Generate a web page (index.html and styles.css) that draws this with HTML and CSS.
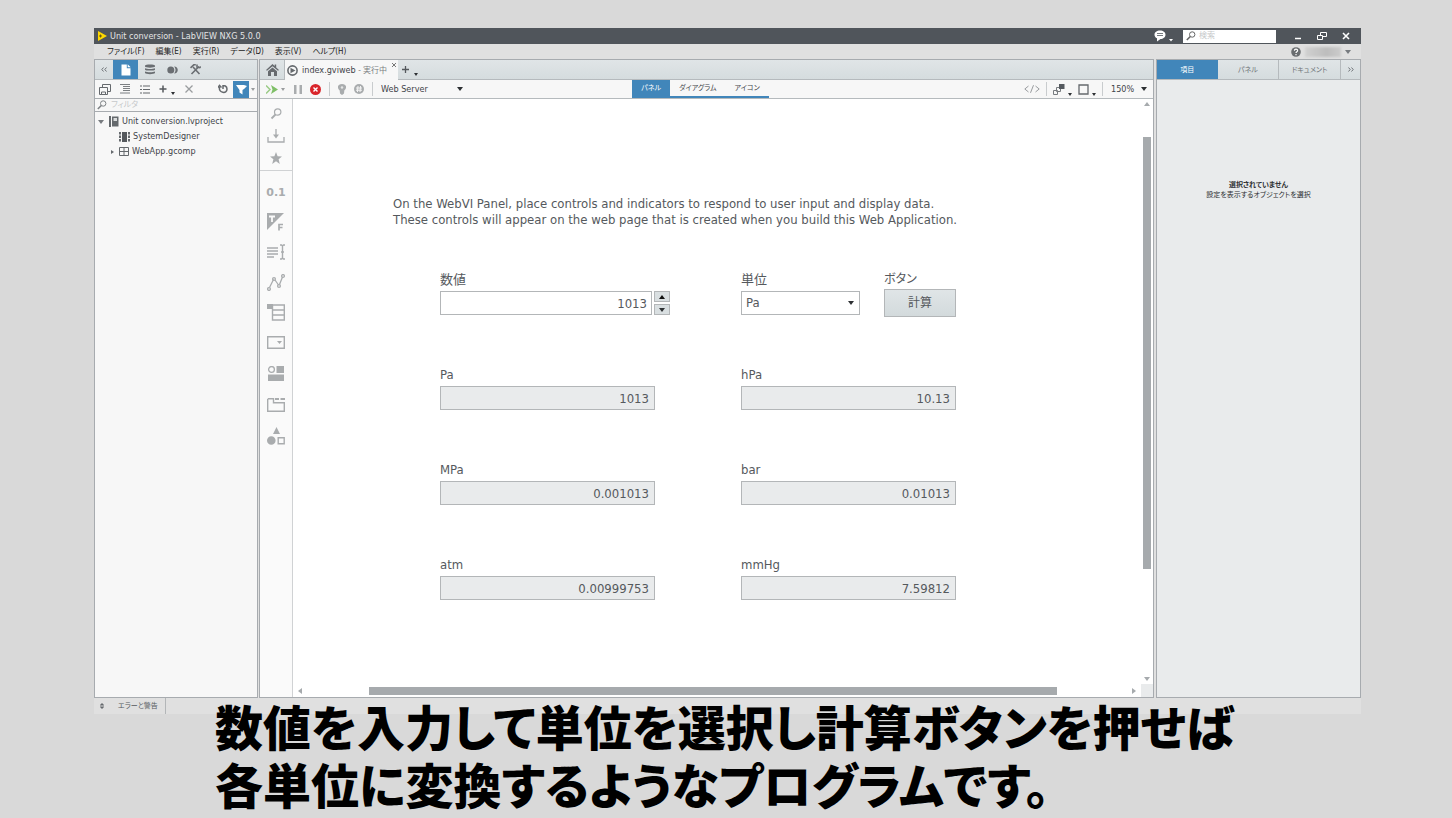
FILE: index.html
```
<!DOCTYPE html>
<html lang="ja">
<head>
<meta charset="utf-8">
<title>Unit conversion - LabVIEW NXG 5.0.0</title>
<link rel="stylesheet" href="styles.css">
</head>
<body>
<div class="app">
  <header class="titlebar">
    <svg class="logo" width="9" height="10" viewBox="0 0 9 10"><path d="M0 0 9 5 0 10Z" fill="#ffd800"/><path d="M1 5h3M2.500 3.500v3" stroke="#6b5a10"/></svg>
    <h1 class="app-title">Unit conversion - LabVIEW NXG 5.0.0</h1>
    <button class="feedback" aria-label="フィードバック"><svg width="20" height="12" viewBox="0 0 20 12"><path d="M6 .5c3.200 0 5.500 1.800 5.500 4.200S9.200 9 6.500 9L3 11.500V8.300C1.400 7.500.5 6.200.5 4.700.5 2.300 2.800.5 6 .5Z" fill="#fff"/><path d="M3 3.500h6M3 5.500h6" stroke="#777c81"/><path d="M15 9h4l-2 2.500Z" fill="#fff"/></svg></button>
    <label class="search"><svg width="10" height="10" viewBox="0 0 10 10" fill="none" stroke="#666"><circle cx="6.200" cy="3.500" r="2.700"/><path d="M4.300 5.500.8 9" stroke-width="1.600"/></svg><input type="text" placeholder="検索" aria-label="検索"></label>
    <div class="window-buttons">
      <button aria-label="最小化"><svg width="10" height="10" viewBox="0 0 10 10"><path d="M2 7.500h6" stroke="#fff" stroke-width="1.500"/></svg></button>
      <button aria-label="元に戻す"><svg width="10" height="10" viewBox="0 0 10 10" fill="#50555b" stroke="#fff"><path d="M3.500 1.500h6v4h-6Z"/><path d="M.5 4.500h5v4h-5Z"/></svg></button>
      <button aria-label="閉じる"><svg width="10" height="10" viewBox="0 0 10 10"><path d="m2 2 6 6M8 2 2 8" stroke="#fff" stroke-width="1.600"/></svg></button>
    </div>
  </header>
  <nav class="menubar">
    <button>ファイル(F)</button><button>編集(E)</button><button>実行(R)</button><button>データ(D)</button><button>表示(V)</button><button>ヘルプ(H)</button>
    <button class="account" aria-label="アカウント"><svg width="10" height="10" viewBox="0 0 10 10"><circle cx="5" cy="5" r="4.800" fill="#6a6d70"/><path d="M3.400 3.800C3.400 1.700 6.600 1.700 6.600 3.700 6.600 4.800 5 4.800 5 6M5 7v1.200" stroke="#fff" fill="none" stroke-width="1.200"/></svg><span class="account-name"></span><i class="caret muted"></i></button>
  </nav>

  <div class="workspace">
    <aside class="project">
      <div class="tabs">
        <button class="chevrons" aria-label="折りたたむ"><svg width="6" height="5" viewBox="0 0 6 5" fill="none" stroke="#6e7377"><path d="M2.500.5.8 2.500l1.700 2M5.500.5 3.800 2.500l1.700 2"/></svg></button>
        <button class="tab-icon active" aria-label="ファイル"><svg width="10" height="12" viewBox="0 0 10 12"><path d="M.5.5h5.300v3.700h3.700v7.300h-9Z" fill="#fff"/><path d="m6.700.3 3 3h-3Z" fill="#fff"/></svg></button>
        <button class="tab-icon" aria-label="データ"><svg width="10" height="11" viewBox="0 0 10 11" fill="#6a6e72"><path d="M0 1.500C0 0 10 0 10 1.500v1C10 4 0 4 0 2.500ZM0 4.200c2 1 8 1 10 0v1.500c-1 1.200-9 1.200-10 0ZM0 7.500c2 1 8 1 10 0V9c-1 1.500-9 1.500-10 0Z"/></svg></button>
        <button class="tab-icon" aria-label="キャプチャ"><svg width="11" height="8" viewBox="0 0 11 8"><circle cx="3.800" cy="4" r="3.500" fill="#6a6e72"/><path d="M7 .5C12 .5 12 7.500 7 7.500 9 5.500 9 2.500 7 .5Z" fill="#6a6e72"/></svg></button>
        <button class="tab-icon" aria-label="ツール"><svg width="11" height="11" viewBox="0 0 11 11" fill="none" stroke="#6a6e72" stroke-width="1.600"><path d="m3 3 6.500 7M9 2.500 1.500 10"/><path d="M.5 3.800 3.800.8h2M7 .5v2.700l2.700.5 1-1.200"/></svg></button>
      </div>
      <div class="toolbar">
        <button class="tool" aria-label="すべて保存"><svg width="12" height="11" viewBox="0 0 12 11" fill="#f7f7f7" stroke="#65696d"><path d="M3.500.5h8v7h-8Z"/><path d="M.5 3.500h8v7h-8Z"/><path d="M2.500 8v2.500h4V8Z"/></svg></button>
        <button class="tool" aria-label="展開"><svg width="10" height="10" viewBox="0 0 10 10" stroke="#7b7f82"><path d="M0 .5h10M3 2.500h7M3 4.500h7M3 6.500h7M0 9h10" /></svg></button>
        <button class="tool" aria-label="一覧"><svg width="10" height="9" viewBox="0 0 10 9" stroke="#65696d" stroke-width="1.200"><path d="M0 1h2M3 1h7M0 4.500h2M3 4.500h7M0 8h2M3 8h7"/></svg></button>
        <button class="tool tool-add" aria-label="追加"><svg width="8" height="8" viewBox="0 0 8 8"><path d="M4 .5v7M.5 4h7" stroke="#55595d" stroke-width="1.500"/></svg><i class="caret low"></i></button>
        <button class="tool" aria-label="削除"><svg width="8" height="8" viewBox="0 0 8 8"><path d="m.5.5 7 7M7.500.5l-7 7" stroke="#9a9d9f" stroke-width="1.300"/></svg></button>
        <button class="tool push" aria-label="更新"><svg width="10" height="10" viewBox="0 0 10 10" fill="none" stroke="#65696d" stroke-width="1.500"><path d="M1.500 3c-1 6 7.500 7.500 7.500 2C9 2 6 1 5 2.300M0 3.500l1.500-2 2 2M5 1v4"/></svg></button>
        <button class="filter-button" aria-label="フィルタ"><svg width="11" height="11" viewBox="0 0 11 11"><path d="M0 1h8l3 1-3 3-1.500 1v4.500l-3-2V6Z" fill="#fff"/></svg></button>
        <i class="caret faint"></i>
      </div>
      <label class="filter"><svg width="10" height="10" viewBox="0 0 10 10" fill="none" stroke="#7e8285"><circle cx="6.200" cy="3.500" r="2.700"/><path d="M4.300 5.500.8 9" stroke-width="1.600"/></svg><input type="text" placeholder="フィルタ" aria-label="フィルタ"></label>
      <ul class="tree">
        <li class="level-0"><i class="caret muted"></i><svg width="10" height="11" viewBox="0 0 10 11"><path d="M0 0h2v11H0Z" fill="#65696d"/><path d="M3 .5h6.500v10H3Z" fill="#65696d"/><path d="M4.500 2h3.500v3H4.500Z" fill="#dadcdd"/></svg><span>Unit conversion.lvproject</span></li>
        <li class="level-1"><svg width="11" height="10" viewBox="0 0 11 10"><path d="M3 0h5v10H3Z" fill="#55595d"/><path d="M1 0v10M10 0v10" stroke="#65696d" stroke-width="2" stroke-dasharray="2.500 1"/></svg><span>SystemDesigner</span></li>
        <li class="level-1 branch"><i class="caret-right"></i><svg width="10" height="9" viewBox="0 0 10 9" fill="none" stroke="#65696d"><path d="M.5.5h9v8h-9ZM5 .5v8M.5 4.500h9"/></svg><span>WebApp.gcomp</span></li>
      </ul>
    </aside>

    <main class="editor">
      <div class="tabs">
        <button class="home" aria-label="ホーム"><svg width="13" height="12" viewBox="0 0 13 12" fill="#666a6e"><path d="M6.500 0 8.700 2V.5h1.500v3L13 6l-1 .8L6.500 2.200 1 6.800 0 6Z"/><path d="M6.500 3.500 11 7.200V12H8V8H5v4H2V7.200Z"/></svg></button>
        <div class="document-tab"><svg width="11" height="11" viewBox="0 0 11 11"><circle cx="5.500" cy="5.500" r="4.600" fill="none" stroke="#666a6e" stroke-width="1.600"/><path d="M3.500 2.800 8.500 5.500l-5 2.700Z" fill="#666a6e"/></svg><span>index.gviweb <em>- 実行中</em></span><button class="tab-close" aria-label="タブを閉じる"><svg width="4" height="4" viewBox="0 0 4 4"><path d="m0 0 4 4M4 0 0 4" stroke="#777"/></svg></button></div>
        <button class="new-tab" aria-label="新規タブ"><svg width="7" height="7" viewBox="0 0 7 7"><path d="M3.500 0v7M0 3.500h7" stroke="#55595d" stroke-width="1.300"/></svg><i class="caret low"></i></button>
      </div>
      <div class="toolbar editor-toolbar">
        <div class="run-tools">
          <button class="run" aria-label="実行"><svg width="12" height="9" viewBox="0 0 12 9"><path d="M5 0 12 4.500 5 9 6.500 4.500Z" fill="#7fbf67"/><path d="M0 .5 4 4.500l-4 4" fill="none" stroke="#9acb86" stroke-width="1.500"/></svg><i class="caret faint"></i></button>
          <button aria-label="一時停止"><svg width="8" height="9" viewBox="0 0 8 9" fill="#a9acae"><path d="M0 0h2.500v9H0ZM5.500 0H8v9H5.500Z"/></svg></button>
          <button aria-label="中止"><svg width="11" height="11" viewBox="0 0 11 11"><circle cx="5.500" cy="5.500" r="5.500" fill="#d9252b"/><path d="m3.500 3.500 4 4M7.500 3.500l-4 4" stroke="#fff" stroke-width="1.400"/></svg></button>
          <i class="divider"></i>
          <button aria-label="実行のハイライト"><svg width="8" height="11" viewBox="0 0 8 11"><path d="M4 0c5 0 5 4.500 2.300 6.500L6 9.500 4 11 2 9.500 1.700 6.500C-1 4.500-1 0 4 0Z" fill="#a9acae"/><circle cx="4" cy="3.500" r="1.200" fill="#e5e6e6"/></svg></button>
          <button aria-label="値を保持"><svg width="10" height="10" viewBox="0 0 10 10"><circle cx="5" cy="5" r="5" fill="#a9acae"/><path d="M4 2 3.500 8M6.500 2 6 8M2 4h6M2 6.200h6" stroke="#f7f7f7"/></svg></button>
          <i class="divider"></i>
          <span class="picker target"><select aria-label="ターゲット"><option>Web Server</option></select></span>
        </div>
        <div class="view-tabs"><button class="active">パネル</button><button>ダイアグラム</button><button>アイコン</button></div>
        <div class="view-tools">
          <button aria-label="コード"><svg width="16" height="8" viewBox="0 0 16 8" fill="none" stroke="#999c9f"><path d="M4.500 1 .8 4l3.700 3M11.500 1l3.700 3-3.700 3M9.500.2 6.500 7.800"/></svg></button>
          <i class="divider"></i>
          <button aria-label="順序"><svg width="12" height="11" viewBox="0 0 12 11" fill="#f7f7f7" stroke="#777b7f"><path d="M.5 6.500h4v4h-4ZM3.500 3.500h4v4h-4Z"/><path d="M6 0h5.500v5H6Z" fill="#555a5f" stroke="none"/></svg><i class="caret low"></i></button>
          <button aria-label="サイズ"><svg width="11" height="11" viewBox="0 0 11 11"><path d="M1 1h9v9H1Z" fill="none" stroke="#65696d" stroke-width="1.300"/></svg><i class="caret low"></i></button>
          <i class="divider"></i>
          <span class="picker zoom"><select aria-label="ズーム"><option>150%</option></select></span>
        </div>
      </div>
      <div class="stage">
        <div class="palette">
          <div class="palette-top">
            <button aria-label="検索"><svg width="12" height="12" viewBox="0 0 12 12" fill="none" stroke="#a9acae"><circle cx="7.700" cy="4" r="3.200" stroke-width="1.200"/><path d="M5.500 6.500 1.500 10.500" stroke-width="1.800"/></svg></button>
            <button aria-label="インポート"><svg width="18" height="14" viewBox="0 0 18 14" fill="none" stroke="#a9acae" stroke-width="1.300"><path d="M1 8v5h16V8M9 0v8"/><path d="m6 5.500 3 4 3-4Z" fill="#a9acae" stroke="none"/></svg></button>
            <button aria-label="お気に入り"><svg width="12" height="12" viewBox="0 0 12 12"><path d="m6 0 1.600 4.300L12 4.500 8.600 7.300 9.800 12 6 9.300 2.200 12 3.400 7.300 0 4.500l4.400-.2Z" fill="#a9acae"/></svg></button>
          </div>
          <div class="palette-items">
            <button class="numeric">0.1</button>
            <button aria-label="ブール"><svg width="18" height="18" viewBox="0 0 18 18" stroke="#a9acae" stroke-width="2"><path d="M0 0h17L0 17Z" fill="#a9acae" stroke="none"/><path d="M2 3.500h6M5 3.500V9" stroke="#fafafa" stroke-width="1.800"/><path d="M12 17.500V11.500h4M12 14.500h3.500" fill="none" stroke-width="1.700"/></svg></button>
            <button aria-label="文字列"><svg width="18" height="16" viewBox="0 0 18 16" fill="none" stroke="#a9acae" stroke-width="1.400"><path d="M0 4h11M0 7h11M0 10h11M0 13h7M13 1h1.500l1 1 1-1H18M15.500 2v12M13 15h1.500l1-1 1 1H18M14 8h3"/></svg></button>
            <button aria-label="グラフ"><svg width="18" height="17" viewBox="0 0 18 17" fill="none" stroke="#a9acae" stroke-width="1.300"><path d="M2.500 13.500 6.500 5.500M8 6l3.500 5M12.500 10.500l3-7.500"/><circle cx="2" cy="15" r="1.400"/><circle cx="7" cy="5" r="1.400"/><circle cx="12" cy="12" r="1.400"/><circle cx="16" cy="2" r="1.400"/></svg></button>
            <button aria-label="配列"><svg width="18" height="17" viewBox="0 0 18 17" fill="none" stroke="#a9acae" stroke-width="1.400"><path d="M0 0h6v5H0Z" fill="#a9acae" stroke="none"/><path d="M5.500 1h11.800v15H5.500ZM5.500 6h12M5.500 11h12"/></svg></button>
            <button aria-label="ドロップダウン"><svg width="18" height="13" viewBox="0 0 18 13"><path d="M.7.7h16.600v11.600H.7Z" fill="none" stroke="#a9acae" stroke-width="1.400"/><path d="M10 5h5l-2.500 3Z" fill="#a9acae"/></svg></button>
            <button aria-label="コントロール"><svg width="16" height="15" viewBox="0 0 16 15" fill="#a9acae"><circle cx="3.500" cy="3.500" r="2.900" fill="none" stroke="#a9acae" stroke-width="1.300"/><path d="M8.500 0H16v7H8.500ZM0 8.500h16V15H0Z"/></svg></button>
            <button aria-label="コンテナ"><svg width="18" height="14" viewBox="0 0 18 14" fill="none" stroke="#a9acae" stroke-width="1.400"><path d="M1 .7h5.500v4h10.800v8.600H.7V.7"/><path d="M8 1h4M13.500 1H18" stroke-width="2"/></svg></button>
            <button aria-label="図形"><svg width="18" height="18" viewBox="0 0 18 18" fill="#a9acae"><path d="M9.500 0 13 7H6ZM0 13.500a4.300 4.300 0 0 1 8.600 0 4.300 4.300 0 0 1-8.600 0"/><path d="M11.200 10.700h6v6h-6Z" fill="none" stroke="#a9acae" stroke-width="1.400"/></svg></button>
          </div>
        </div>
        <div class="canvas">
          <p class="intro">On the WebVI Panel, place controls and indicators to respond to user input and display data.<br>These controls will appear on the web page that is created when you build this Web Application.</p>
          <form class="converter">
            <div class="field"><label for="value">数値</label>
              <div class="number"><input id="value" type="text" value="1013"><div class="spinner"><button type="button" aria-label="増やす"><i class="caret up"></i></button><button type="button" aria-label="減らす"><i class="caret down"></i></button></div></div></div>
            <div class="unit-row">
              <div class="field"><label for="unit">単位</label><span class="picker unit"><select id="unit"><option>Pa</option></select></span></div>
              <div class="action"><label for="calc">ボタン</label><button id="calc" type="button">計算</button></div>
            </div>
            <div class="field"><label for="pa">Pa</label><input id="pa" type="text" readonly value="1013"></div>
            <div class="field"><label for="hpa">hPa</label><input id="hpa" type="text" readonly value="10.13"></div>
            <div class="field"><label for="mpa">MPa</label><input id="mpa" type="text" readonly value="0.001013"></div>
            <div class="field"><label for="bar">bar</label><input id="bar" type="text" readonly value="0.01013"></div>
            <div class="field"><label for="atm">atm</label><input id="atm" type="text" readonly value="0.00999753"></div>
            <div class="field"><label for="mmhg">mmHg</label><input id="mmhg" type="text" readonly value="7.59812"></div>
          </form>
        </div>
        <div class="scroll vertical"><i class="arrow up"></i><div class="track"><div class="thumb"></div></div><i class="arrow down"></i></div>
        <div class="scroll horizontal"><i class="arrow left"></i><div class="track"><div class="thumb"></div></div><i class="arrow right"></i></div>
        <div class="corner"></div>
      </div>
    </main>

    <aside class="properties">
      <div class="tabs"><button class="active">項目</button><button>パネル</button><button>ドキュメント</button><button class="more" aria-label="展開"><svg width="6" height="5" viewBox="0 0 6 5" fill="none" stroke="#6e7377"><path d="m.5.5 1.700 2-1.700 2M3.500.5l1.700 2-1.700 2"/></svg></button></div>
      <div class="empty"><strong>選択されていません</strong><span>設定を表示するオブジェクトを選択</span></div>
    </aside>
  </div>
  <footer class="statusbar"><button><svg width="4" height="6" viewBox="0 0 4 6" fill="#65696d"><path d="m2 0 2 2H0ZM0 4h4L2 6ZM0 2.500h4v1H0Z"/></svg><span>エラーと警告</span></button></footer>
</div>
<div class="caption"><p>数値を入力して単位を選択し計算ボタンを押せば</p><p>各単位に変換するようなプログラムです。</p></div>
</body>
</html>
```
FILE: styles.css
```
* { box-sizing: border-box; }
body {
  margin: 0;
  min-height: 100vh;
  display: flex;
  flex-direction: column;
  padding: 28px 91px 104px 94px;
  background: #d9d9d9;
  color: #3f4449;
  font: 9px/12px "DejaVu Sans Condensed", "Noto Sans", "Noto Sans CJK JP", sans-serif;
  font-feature-settings: "palt";
}
button, input, select { font: inherit; color: inherit; font-feature-settings: inherit; margin: 0; padding: 0; border: 0; background: none; border-radius: 0; }
button { display: flex; align-items: center; justify-content: center; white-space: nowrap; }
select { appearance: none; outline: 0; }
input { outline: 0; min-width: 0; }
svg { display: block; flex: none; }

.app { flex: 1; display: flex; flex-direction: column; background: #e0e0e0; }
.titlebar { display: flex; align-items: center; height: 16px; background: #50555b; color: #e3e4e5; padding: 0 10px 0 4px; }
.app-title { flex: 1; margin: 0 0 0 3px; font-size: 9px; font-weight: 400; }
.feedback { margin-right: 9px; }
.search { display: flex; align-items: center; gap: 3px; width: 93px; height: 13px; padding: 0 3px; background: #fff; }
.search input, .filter input { flex: 1; font-size: 8px; height: 12px; }
.search input::placeholder, .filter input::placeholder { color: #c6c8ca; opacity: 1; }
.window-buttons { display: flex; gap: 14px; margin-left: 17px; }
.menubar { display: flex; align-items: center; gap: 11px; height: 15px; padding: 0 10px 0 13px; color: #222; font-size: 8px; }
.account { margin-left: auto; gap: 4px; }
.account-name { width: 36px; height: 10px; background: linear-gradient(90deg, #d2d2d2, #bdbdbd 60%, #cccccc); filter: blur(1px); }

.caret { flex: none; width: 0; height: 0; border: 3px solid transparent; border-top: 4px solid #2d3033; border-bottom: 0; }
.caret.low { align-self: flex-end; border-width: 3px 2px 0; }
.caret.muted { border-width: 4px 3px 0; border-top-color: #777b7f; }
.caret.faint { border-width: 3px 2px 0; border-top-color: #999c9e; }
.caret.up { border-top: 0; border-bottom: 4px solid #111; }
.caret-right { width: 0; height: 0; border: 2px solid transparent; border-left: 3px solid #65696d; border-right: 0; }

.workspace { flex: 1; display: flex; gap: 1px; }
.project, .editor, .properties { display: flex; flex-direction: column; border: 1px solid #a7abaf; background: #f7f7f7; }
.project { width: 164px; }
.editor { flex: 1; }
.properties { width: 205px; margin-left: 1px; background: #e9ebec; }
.tabs { display: flex; height: 20px; background: linear-gradient(#e0e5e7, #d5dcde); border-bottom: 1px solid #b5babd; }
.toolbar { display: flex; align-items: center; height: 18px; }
.active { background: #4186ba; color: #fff; }
.chevrons { width: 18px; }
.tab-icon { width: 23px; }
.tab-icon.active { width: 25px; }

.tool { width: 20px; height: 12px; }
.tool-add { width: 24px; gap: 4px; }
.push { margin-left: auto; }
.filter-button { width: 16px; height: 17px; margin-right: 2px; background: #4186ba; }
.project .caret.faint { margin-right: 2px; }
.filter { display: flex; align-items: center; gap: 4px; height: 14px; padding: 0 2px; border: solid #a7abaf; border-width: 1px 0; }
.tree { list-style: none; margin: 2px 0 0; padding: 0; line-height: 15px; }
.tree li { display: flex; align-items: center; gap: 3px; height: 15px; }
.level-0 { padding-left: 3px; }
.level-0 .caret { margin-right: 2px; }
.level-1 { padding-left: 24px; }
.level-1.branch { padding-left: 16px; }
.branch .caret-right { margin-right: 2px; }

.home { width: 25px; border-right: 1px solid #b5babd; }
.document-tab { display: flex; align-items: center; gap: 4px; width: 113px; height: 20px; padding: 0 2px; background: #f7f7f7; }
.document-tab em { font-style: normal; font-size: 8px; color: #7b7f82; }
.tab-close { align-self: flex-start; margin: 3px 0 0 auto; }
.new-tab { gap: 5px; height: 14px; margin: 2px 0 0 4px; }
.editor-toolbar { display: grid; grid-template-columns: 1fr auto 1fr; padding: 0 6px; border-bottom: 1px solid #b5babd; height: 19px; }
.run-tools, .view-tools { display: flex; align-items: center; gap: 8px; height: 13px; }
.view-tools { justify-content: flex-end; gap: 6px; }
.run { gap: 3px; margin-right: 1px; }
.view-tools button { gap: 3px; height: 13px; }
.divider { width: 1px; height: 14px; background: #c9ccce; }
.picker { position: relative; display: flex; align-items: center; }
.picker::after { content: ""; position: absolute; right: 0; border: 3px solid transparent; border-top: 4px solid #2d3033; border-bottom: 0; pointer-events: none; }
.picker select { width: 100%; }
.target { width: 82px; }
.zoom { width: 36px; margin-left: 2px; }
.view-tabs { display: flex; align-self: stretch; margin-right: 12px; border-bottom: 2px solid #4186ba; font-size: 7px; }
.view-tabs button { padding: 0 9px; }

.stage { flex: 1; display: grid; grid-template: 1fr 13px / 33px 1fr 12px; background: #fff; }
.palette { grid-row: 1 / 3; display: flex; flex-direction: column; background: #fafafa; border-right: 1px solid #d0d2d4; }
.palette-top { display: flex; flex-direction: column; height: 72px; padding-top: 4px; border-bottom: 1px solid #d0d2d4; }
.palette-top button { height: 22px; }
.palette-items { display: flex; flex-direction: column; padding-top: 6px; }
.palette-items button { height: 30px; }
.palette-items button:nth-child(n+6) { height: 31px; }
.numeric { color: #a9acae; font: bold 11px "DejaVu Sans", sans-serif; }

.canvas { padding: 97px 0 0 100px; font-size: 13px; line-height: 16px; color: #55595d; }
.intro { margin: 0; }
.converter { display: grid; grid-template-columns: 230px 215px; gap: 51px 71px; margin: 43px 0 0 47px; align-items: end; }
.field { display: flex; flex-direction: column; gap: 2px; }
.field label { height: 18px; line-height: 18px; }
.field input { height: 24px; width: 215px; padding: 0 5px; border: 1px solid #b3b6b8; background: #fff; text-align: right; }
.field input[readonly] { background: #e9ebec; }
.number { display: flex; gap: 2px; }
.number input { width: 213px; padding-right: 4px; }
.spinner { display: flex; flex-direction: column; gap: 2px; }
.spinner button { width: 16px; height: 11px; background: #d9dfe1; border: 1px solid #b3b6b8; }
.unit-row { display: flex; justify-content: space-between; height: 44px; }
.unit { width: 119px; height: 24px; border: 1px solid #b3b6b8; background: #fff; }
.unit select { padding-left: 4px; }
.unit::after { right: 5px; }
.action { display: flex; flex-direction: column; gap: 2px; width: 72px; height: 46px; font-size: 12px; }
.action button { height: 28px; flex: none; background: linear-gradient(#e0e5e7, #d3dadc); border: 1px solid #b3b6b8; }

.scroll { display: flex; align-items: center; }
.vertical { flex-direction: column; padding: 3px 0; }
.horizontal { padding: 0 5px; gap: 5px; }
.track { flex: 1; display: flex; }
.vertical .track { width: 8px; flex-direction: column; padding: 31px 0 108px; }
.horizontal .track { height: 8px; padding: 0 70px 0 62px; }
.thumb { flex: 1; background: #a6aaad; }
.arrow { border: 3px solid transparent; }
.arrow.up { border-bottom: 4px solid #a6aaad; border-top: 0; }
.arrow.down { border-top: 4px solid #a6aaad; border-bottom: 0; }
.arrow.left { border-right: 4px solid #a6aaad; border-left: 0; }
.arrow.right { border-left: 4px solid #a6aaad; border-right: 0; }
.corner { background: #e9ebec; }

.properties .tabs { font-size: 7px; color: #6e7377; }
.properties .tabs button { flex: 1; border-right: 1px solid #b5babd; }
.properties .tabs .active { color: #fff; border-right: 0; }
.properties .tabs .more { flex: none; width: 19px; border-right: 0; }
.empty { display: flex; flex-direction: column; align-items: center; margin-top: 100px; font-size: 7px; line-height: 10px; color: #2d3033; }
.statusbar { display: flex; height: 16px; font-size: 7px; color: #55595d; }
.statusbar button { gap: 14px; padding: 0 7px 0 6px; border-right: 1px solid #b3b6b8; }

.caption { position: absolute; left: 215px; top: 696px; color: #000; font: 900 48px/58px "Noto Sans CJK JP", sans-serif; font-feature-settings: "palt"; white-space: nowrap; }
.caption p { margin: 0; }
```
